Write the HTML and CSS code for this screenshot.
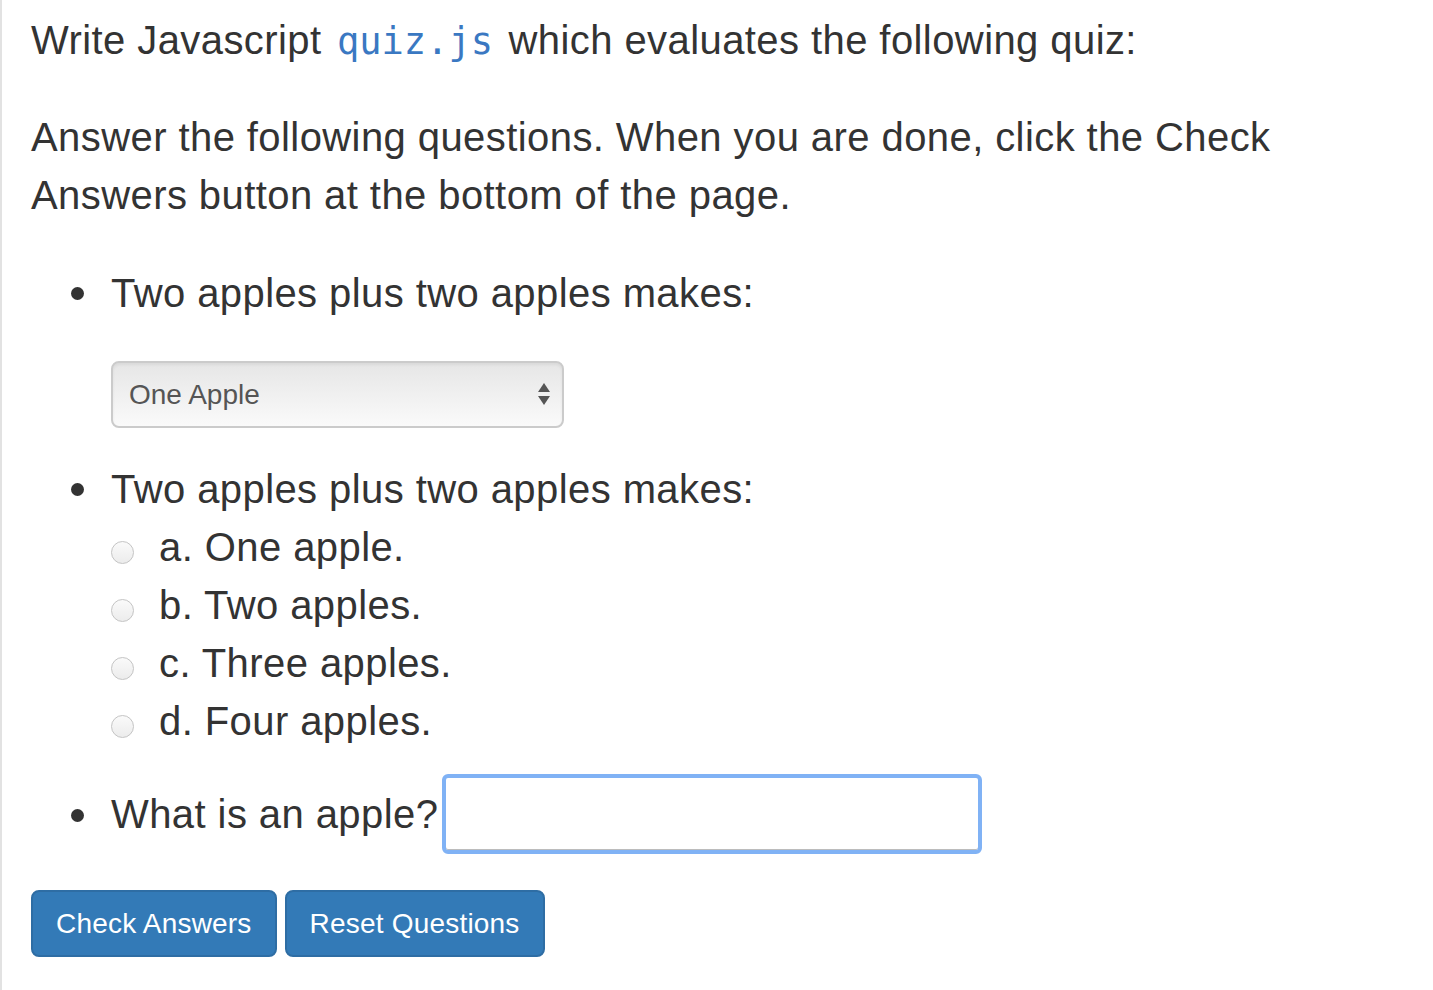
FILE: index.html
```html
<!DOCTYPE html>
<html lang="en">
<head>
    <meta charset="UTF-8">
    <title>Quiz</title>
    <link rel="stylesheet" href="styles.css">
</head>
<body>
    <p class="task">Write Javascript <code>quiz.js</code> which evaluates the following quiz:</p>

    <p class="intro">Answer the following questions. When you are done, click the Check Answers button at the bottom of the page.</p>

    <ul class="questions">
        <li class="q-select">
            <div class="q-text">Two apples plus two apples makes:</div>
            <div class="select-wrap">
                <select class="answer-select">
                    <option>One Apple</option>
                    <option>Two Apples</option>
                    <option>Three Apples</option>
                    <option>Four Apples</option>
                </select>
                <svg class="select-arrows" width="14" height="24" viewBox="0 0 14 24">
                    <path d="M7 1 L13 10 L1 10 Z" fill="#555"/>
                    <path d="M1 14 L13 14 L7 23 Z" fill="#555"/>
                </svg>
            </div>
        </li>
        <li class="q-radio">
            <div class="q-text">Two apples plus two apples makes:</div>
            <label class="option"><input type="radio" name="q2" value="a"><span>a. One apple.</span></label>
            <label class="option"><input type="radio" name="q2" value="b"><span>b. Two apples.</span></label>
            <label class="option"><input type="radio" name="q2" value="c"><span>c. Three apples.</span></label>
            <label class="option"><input type="radio" name="q2" value="d"><span>d. Four apples.</span></label>
        </li>
        <li class="q-input">
            <span class="q-text">What is an apple?</span>
            <input type="text" class="answer-input focused">
        </li>
    </ul>

    <div class="actions">
        <button class="btn">Check Answers</button>
        <button class="btn">Reset Questions</button>
    </div>
</body>
</html>
```

FILE: styles.css
```css
body {
    margin: 0;
    padding: 11px 0 0 29px;
    border-left: 2px solid #e2e2e2;
    min-height: 979px;
    font-family: "Liberation Sans", Arial, sans-serif;
    font-size: 40px;
    line-height: 58px;
    letter-spacing: 0.42px;
    color: #333;
    background: #fff;
}

p {
    margin: 0;
}

.task code {
    font-family: "DejaVu Sans Mono", "Liberation Mono", monospace;
    font-size: 37px;
    letter-spacing: 0;
    color: #3a78c2;
    padding: 0 4px;
}

.intro {
    margin-top: 37px;
    width: 1280px;
}

.questions {
    list-style: none;
    margin: 40px 0 0;
    padding-left: 80px;
}

/* viñeta propia, más grande que la del navegador */
.questions li {
    position: relative;
}

.questions li::before {
    content: "";
    position: absolute;
    left: -40px;
    top: 23px;
    width: 13px;
    height: 13px;
    border-radius: 50%;
    background: #333;
}

.questions .q-input::before {
    top: 35px;
}

.select-wrap {
    position: relative;
    width: 453px;
    margin: 39px 0 32px;
}

.answer-select {
    appearance: none;
    -webkit-appearance: none;
    width: 453px;
    height: 67px;
    padding: 0 16px;
    font-family: "Liberation Sans", Arial, sans-serif;
    font-size: 28px;
    color: #555;
    border: 2px solid #cbcbcb;
    border-radius: 8px;
    background: linear-gradient(#e6e6e6, #fafafa);
    box-shadow: inset 0 2px 3px rgba(0, 0, 0, 0.06);
}

.select-arrows {
    position: absolute;
    right: 13px;
    top: 21px;
}

.option {
    display: flex;
    align-items: center;
    height: 58px;
}

.option input {
    appearance: none;
    -webkit-appearance: none;
    width: 23px;
    height: 23px;
    margin: 10px 25px 0 0;
    border: 1px solid #c4c4c4;
    border-radius: 50%;
    background: linear-gradient(#fafafa, #ececec);
}

.q-input {
    display: flex;
    align-items: center;
    margin-top: 24px;
}

.answer-input {
    width: 532px;
    height: 72px;
    margin: 0 0 0 4px;
    box-sizing: content-box;
    padding: 0;
    font-size: 28px;
}

.answer-input.focused {
    outline: none;
    border: 4px solid #80b2f5;
    border-radius: 6px;
    box-shadow: inset 0 -1px 0 #bcbcbc;
}

.actions {
    display: flex;
    gap: 8px;
    margin-top: 36px;
}

.btn {
    height: 67px;
    padding: 0 23px;
    font-family: "Liberation Sans", Arial, sans-serif;
    font-size: 28px;
    letter-spacing: 0.2px;
    color: #fff;
    background-color: #337ab7;
    border: 2px solid #2e6da4;
    border-radius: 8px;
    cursor: pointer;
}
```
